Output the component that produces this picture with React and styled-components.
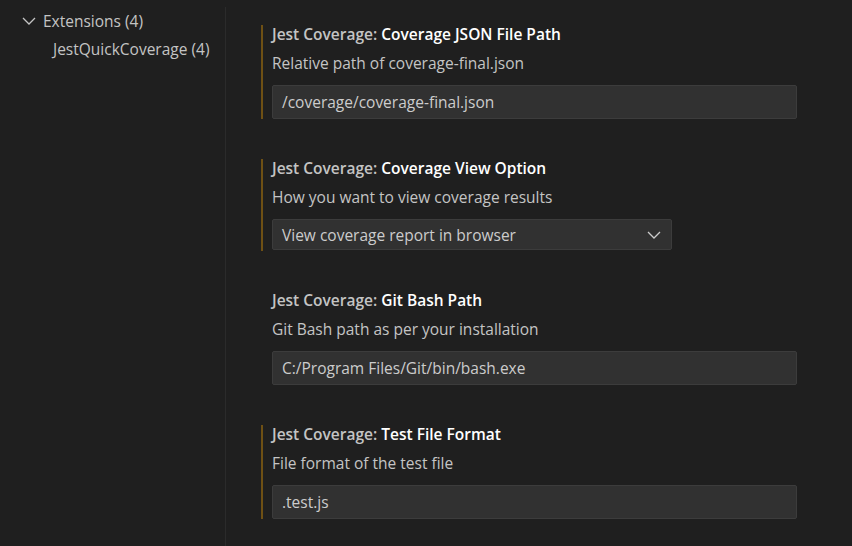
import React from 'react'
import styled, { createGlobalStyle } from 'styled-components'

const GlobalStyle = createGlobalStyle`
  body {
    margin: 0;
    background: #1f1f1f;
    font-family: "Open Sans", "Noto Sans", sans-serif;
  }
`

const settings = [
  {
    id: 'jsonPath',
    name: 'Coverage JSON File Path',
    description: 'Relative path of coverage-final.json',
    kind: 'input',
    value: '/coverage/coverage-final.json',
    modified: true,
  },
  {
    id: 'viewOption',
    name: 'Coverage View Option',
    description: 'How you want to view coverage results',
    kind: 'select',
    value: 'View coverage report in browser',
    modified: true,
  },
  {
    id: 'gitBash',
    name: 'Git Bash Path',
    description: 'Git Bash path as per your installation',
    kind: 'input',
    value: 'C:/Program Files/Git/bin/bash.exe',
    modified: false,
  },
  {
    id: 'testFormat',
    name: 'Test File Format',
    description: 'File format of the test file',
    kind: 'input',
    value: '.test.js',
    modified: true,
  },
]

const Chevron = () => (
  <svg width="14" height="8" viewBox="0 0 14 8" fill="none">
    <path d="M1 1l6 6 6-6" stroke="currentColor" strokeWidth="1.3" />
  </svg>
)

export default function App() {
  return (
    <Page>
      <GlobalStyle />
      <Sidebar>
        <TreeRow $indent={22}>
          <TwistIcon><Chevron /></TwistIcon>
          Extensions (4)
        </TreeRow>
        <TreeRow $indent={53}>JestQuickCoverage (4)</TreeRow>
      </Sidebar>
      <Content>
        {settings.map(s => (
          <Setting key={s.id} $modified={s.modified}>
            <Title>
              <Category>Jest Coverage: </Category>
              <Name>{s.name}</Name>
            </Title>
            <Description>{s.description}</Description>
            {s.kind === 'select' ? (
              <Select>
                <span>{s.value}</span>
                <SelectArrow><Chevron /></SelectArrow>
              </Select>
            ) : (
              <Input>{s.value}</Input>
            )}
          </Setting>
        ))}
      </Content>
    </Page>
  )
}

const Page = styled.div`
  display: flex;
  align-items: flex-start;
  height: 546px;
  background: #1f1f1f;
  overflow: hidden;
`

const Sidebar = styled.nav`
  width: 226px;
  height: 539px;
  margin-top: 7px;
  flex-shrink: 0;
  box-sizing: border-box;
  border-right: 1px solid #2b2b2b;
`

const TreeRow = styled.div`
  display: flex;
  align-items: center;
  height: 28px;
  padding-left: ${p => p.$indent}px;
  font-size: 15.5px;
  color: #c4c4c4;
`

const TwistIcon = styled.span`
  display: flex;
  width: 21px;
  color: #c4c4c4;
`

const Content = styled.main`
  flex: 1;
  padding: 25px 0 0 35px;
  display: flex;
  flex-direction: column;
  gap: 40px;
`

const Setting = styled.section`
  width: 536px;
  border-left: 2px solid ${p => (p.$modified ? '#6e5014' : 'transparent')};
  padding-left: 9px;
  display: flex;
  flex-direction: column;
`

const Title = styled.div`
  font-size: 15.5px;
  line-height: 18px;
  font-weight: 600;
  margin-bottom: 11px;
`

const Category = styled.span`
  color: #c4c4c4;
`

const Name = styled.span`
  color: #ffffff;
`

const Description = styled.div`
  font-size: 15.5px;
  line-height: 18px;
  color: #c4c4c4;
  margin-bottom: 13px;
`

const Input = styled.div`
  box-sizing: border-box;
  width: 525px;
  height: 34px;
  display: flex;
  align-items: center;
  padding: 0 9px;
  background: #313131;
  border: 1px solid #3c3c3c;
  border-radius: 2px;
  font-size: 15.5px;
  color: #cccccc;
`

const Select = styled(Input)`
  width: 400px;
  height: 31px;
  margin-bottom: 1px;
  justify-content: space-between;
  padding-right: 10px;
`

const SelectArrow = styled.span`
  display: flex;
  color: #cccccc;
`
